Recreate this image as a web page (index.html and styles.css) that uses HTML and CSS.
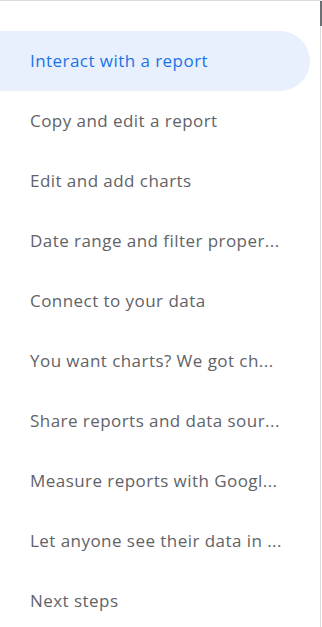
FILE: index.html
```html
<!DOCTYPE html>
<html>
<head>
<meta charset="utf-8">
<link rel="stylesheet" href="styles.css">
</head>
<body>
<nav class="toc">
  <div class="thumb"></div>
  <ul class="toc-list">
    <li class="toc-item active"><span class="label">Interact with a report</span></li>
    <li class="toc-item"><span class="label">Copy and edit a report</span></li>
    <li class="toc-item"><span class="label">Edit and add charts</span></li>
    <li class="toc-item"><span class="label">Date range and filter proper...</span></li>
    <li class="toc-item"><span class="label">Connect to your data</span></li>
    <li class="toc-item"><span class="label">You want charts? We got ch...</span></li>
    <li class="toc-item"><span class="label">Share reports and data sour...</span></li>
    <li class="toc-item"><span class="label">Measure reports with Googl...</span></li>
    <li class="toc-item"><span class="label">Let anyone see their data in ...</span></li>
    <li class="toc-item"><span class="label">Next steps</span></li>
  </ul>
</nav>
</body>
</html>
```
FILE: styles.css
```css
html, body {
  margin: 0;
  padding: 0;
  background: #ffffff;
}
.toc {
  position: relative;
  width: 320px;
  height: 626px;
  border-top: 1px solid #dadce0;
  border-right: 1px solid #dadce0;
  font-family: "Open Sans", "Liberation Sans", sans-serif;
}
.thumb {
  position: absolute;
  right: -2px;
  top: 0;
  width: 2px;
  height: 25px;
  background: #6b7075;
}
.toc-list {
  list-style: none;
  margin: 0;
  padding: 30px 10px 0 0;
}
.toc-item {
  height: 60px;
  box-sizing: border-box;
  display: flex;
  align-items: center;
  padding: 0 26px 2px 30px;
  border-radius: 0 30px 30px 0;
  color: #5f6368;
  font-size: 17px;
  letter-spacing: 0.45px;
}
.toc-item .label {
  white-space: nowrap;
  overflow: hidden;
}
.toc-item.active {
  background: #e8f0fe;
  color: #1a73e8;
}
```
